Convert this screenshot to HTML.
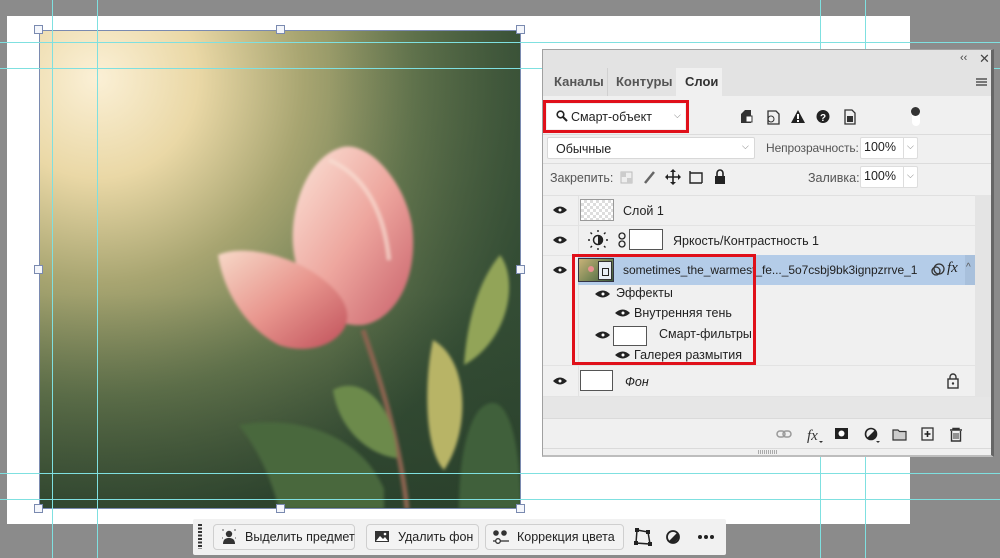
<!DOCTYPE html>
<html><head><meta charset="utf-8"><style>
*{margin:0;padding:0;box-sizing:border-box}
body{width:1000px;height:558px;overflow:hidden;background:#8b8b8b;position:relative;font-family:"Liberation Sans","DejaVu Sans",sans-serif;font-size:12px;color:#222}
.a{position:absolute}
.gv{position:absolute;top:0;height:558px;width:1px;background:#7fe0e0}
.gh{position:absolute;left:0;width:1000px;height:1px;background:#7fe0e0}
.h{position:absolute;width:9px;height:9px;background:#f4f6fb;border:1px solid #7a8ab0}
.t{position:absolute;white-space:nowrap}
.box{position:absolute;background:#fff;border:1px solid #c8c8c8;border-radius:2px}
.btn{position:absolute;top:524px;height:26px;background:#f3f3f3;border:1px solid #cfcfcf;border-radius:4px;font-size:12.5px;color:#222}
</style></head><body>
<div class="a" style="left:7px;top:16px;width:903px;height:508px;background:#fff"></div>
<svg class="a" style="left:39px;top:30px" width="482" height="479" viewBox="0 0 482 479">
<defs>
<radialGradient id="lg" cx="0.12" cy="0.1" r="0.95">
<stop offset="0" stop-color="#fbf0d6"/><stop offset="0.22" stop-color="#ead8a6"/><stop offset="0.45" stop-color="#a8a571"/><stop offset="0.7" stop-color="#6b7c52"/><stop offset="1" stop-color="#3a5238"/></radialGradient>
<linearGradient id="bt" x1="0" y1="0" x2="0" y2="1"><stop offset="0.55" stop-color="#1c3020" stop-opacity="0"/><stop offset="1" stop-color="#1c3020" stop-opacity="0.45"/></linearGradient>
<linearGradient id="rt" x1="0" y1="0" x2="1" y2="0"><stop offset="0.6" stop-color="#2c4630" stop-opacity="0"/><stop offset="1" stop-color="#2c4630" stop-opacity="0.45"/></linearGradient>
<linearGradient id="p1" x1="0" y1="0" x2="1" y2="1"><stop offset="0" stop-color="#fbe4d8"/><stop offset="0.5" stop-color="#eea79f"/><stop offset="1" stop-color="#c8606a"/></linearGradient>
<linearGradient id="p2" x1="0" y1="0" x2="1" y2="1"><stop offset="0" stop-color="#f7d9c8"/><stop offset="0.5" stop-color="#e8968e"/><stop offset="1" stop-color="#c0505a"/></linearGradient>
<filter id="bl"><feGaussianBlur stdDeviation="1.5"/></filter>
</defs>
<rect width="482" height="479" fill="url(#lg)"/>
<rect width="482" height="479" fill="url(#rt)"/>
<rect width="482" height="479" fill="url(#bt)"/>
<g filter="url(#bl)">
<path d="M324 300 C 345 360 362 420 368 479" stroke="#8a6450" stroke-width="5" fill="none"/>
<path d="M461 225 C 480 250 470 310 425 335 C 428 290 440 250 461 225Z" fill="#92a458"/>
<path d="M394 310 C 430 330 432 400 405 440 C 385 420 385 350 394 310Z" fill="#b8b466"/>
<path d="M294 360 C 320 345 355 370 358 428 C 330 425 300 400 294 360Z" fill="#6c8a4c"/>
<path d="M200 395 C 250 385 320 400 345 459 L 345 479 L 240 479 C 230 440 215 415 200 395Z" fill="#48683c"/>
<path d="M440 380 C 470 350 482 420 482 479 L 420 479 C 420 440 425 400 440 380Z" fill="#40603a"/>
<path d="M304 117 C 330 112 365 150 373 195 C 380 250 355 290 324 295 C 285 298 258 262 254 215 C 251 175 270 125 304 117Z" fill="url(#p1)"/>
<path d="M179 225 C 200 215 250 222 285 250 C 310 270 315 290 300 305 C 285 320 260 322 240 315 C 210 300 185 265 179 225Z" fill="url(#p2)"/>
<path d="M290 130 C 325 145 345 180 350 230" stroke="#f9dfd4" stroke-width="4" fill="none" opacity="0.7"/>
</g>
</svg>
<div class="a" style="left:39px;top:30px;width:482px;height:479px;border:1px solid #7a8ab0"></div>
<div class="gv" style="left:52px"></div><div class="gv" style="left:97px"></div><div class="gv" style="left:820px"></div><div class="gv" style="left:865px"></div>
<div class="gh" style="top:42px"></div><div class="gh" style="top:68px"></div><div class="gh" style="top:473px"></div><div class="gh" style="top:499px"></div>
<div class="h" style="left:34px;top:25px"></div><div class="h" style="left:276px;top:25px"></div><div class="h" style="left:516px;top:25px"></div>
<div class="h" style="left:34px;top:265px"></div><div class="h" style="left:516px;top:265px"></div>
<div class="h" style="left:34px;top:504px"></div><div class="h" style="left:276px;top:504px"></div><div class="h" style="left:516px;top:504px"></div>

<!-- panel -->
<div class="a" style="left:542px;top:49px;width:452px;height:408px;background:#f0f0f0;border:1px solid #a0a0a0;border-right:3px solid #666;border-bottom:2px solid #bdbdbd"></div>
<div class="a" style="left:543px;top:50px;width:448px;height:18px;background:#e3e3e3"></div>
<div class="t" style="left:960px;top:52px;font-size:11px;color:#444">‹‹</div>
<div class="t" style="left:979px;top:51px;font-size:13px;color:#444">✕</div>
<div class="a" style="left:543px;top:68px;width:448px;height:28px;background:#e3e3e3"></div>
<div class="a" style="left:607px;top:68px;width:1px;height:28px;background:#d0d0d0"></div>
<div class="a" style="left:676px;top:68px;width:46px;height:29px;background:#f0f0f0"></div>
<div class="t" style="left:554px;top:74px;font-size:13px;font-weight:bold;color:#555">Каналы</div>
<div class="t" style="left:616px;top:74px;font-size:13px;font-weight:bold;color:#555">Контуры</div>
<div class="t" style="left:685px;top:74px;font-size:13px;font-weight:bold;color:#333">Слои</div>
<div class="a" style="left:976px;top:78px;width:11px;height:8px;border-top:2px solid #777;border-bottom:2px solid #777"></div><div class="a" style="left:976px;top:81px;width:11px;height:2px;background:#777"></div>

<div class="a" style="left:543px;top:100px;width:146px;height:33px;border:3px solid #e0101a"></div>
<div class="a" style="left:547px;top:104px;width:138px;height:25px;background:#fff"></div>
<svg class="a" style="left:556px;top:110px" width="12" height="12"><circle cx="4.5" cy="4.5" r="3.3" stroke="#222" stroke-width="1.6" fill="none"/><path d="M7 7l4 4" stroke="#222" stroke-width="2"/></svg>
<div class="t" style="left:571px;top:110px;font-size:12.5px">Смарт-объект</div>
<div class="t" style="left:674px;top:110px;font-size:9px;color:#777">⌵</div>
<svg class="a" style="left:738px;top:108px" width="125" height="18">
<path d="M3 15 L3 6 L7 2 L13 2 L13 15Z" fill="#333"/><rect x="8" y="8" width="6" height="6" fill="#fff" stroke="#333"/>
<path d="M30 3h8l3 3v10h-11z" fill="none" stroke="#333" stroke-width="1.3"/><circle cx="33" cy="11" r="3" fill="none" stroke="#333"/>
<path d="M60 2 L67 15 L53 15Z" fill="#222"/><rect x="59" y="6" width="2" height="5" fill="#fff"/><rect x="59" y="12" width="2" height="2" fill="#fff"/>
<circle cx="85" cy="8.5" r="6.5" fill="#222"/><text x="82" y="13" font-size="10" font-weight="bold" fill="#fff" font-family="Liberation Sans">?</text>
<path d="M107 2h7l3 3v11h-10z" fill="none" stroke="#333" stroke-width="1.3"/><rect x="109" y="8" width="6" height="6" fill="#333"/>
</svg>
<div class="a" style="left:912px;top:113px;width:8px;height:13px;background:#fff;border-radius:4px"></div>
<div class="a" style="left:911px;top:107px;width:9px;height:9px;background:#333;border-radius:50%"></div>
<div class="a" style="left:543px;top:134px;width:448px;height:1px;background:#dcdcdc"></div>

<div class="box" style="left:547px;top:137px;width:208px;height:22px;border-color:#d8d8d8"></div>
<div class="t" style="left:556px;top:142px;font-size:12.5px">Обычные</div>
<div class="t" style="left:742px;top:141px;font-size:9px;color:#777">⌵</div>
<div class="t" style="left:766px;top:141px;font-size:12px;color:#555;letter-spacing:-0.1px">Непрозрачность:</div>
<div class="box" style="left:860px;top:137px;width:58px;height:22px;border-color:#ddd"></div>
<div class="a" style="left:903px;top:138px;width:1px;height:20px;background:#ddd"></div>
<div class="t" style="left:864px;top:140px;font-size:12.5px">100%</div>
<div class="t" style="left:907px;top:141px;font-size:9px;color:#777">⌵</div>
<div class="a" style="left:543px;top:163px;width:448px;height:1px;background:#dcdcdc"></div>

<div class="t" style="left:550px;top:171px;font-size:12.5px;color:#555">Закрепить:</div>
<svg class="a" style="left:619px;top:169px" width="110" height="16">
<rect x="2" y="3" width="11" height="11" fill="#eee" stroke="#bbb"/><rect x="2" y="3" width="5" height="5" fill="#ccc"/><rect x="8" y="9" width="5" height="5" fill="#ccc"/>
<path d="M26 14 L35 3" stroke="#666" stroke-width="2.5"/>
<path d="M54 1v14M47 8h14" stroke="#222" stroke-width="1.6"/><path d="M54 0l-3 3h6zM54 16l-3-3h6zM46 8l3-3v6zM62 8l-3-3v6z" fill="#222"/>
<path d="M71 4h12v10M71 2v12h12" stroke="#222" stroke-width="1.4" fill="none"/>
<rect x="96" y="7" width="10" height="8" fill="#222"/><path d="M98 7v-3a3 3 0 0 1 6 0v3" stroke="#222" stroke-width="1.6" fill="none"/>
</svg>
<div class="t" style="left:808px;top:171px;font-size:12.5px;color:#555">Заливка:</div>
<div class="box" style="left:860px;top:166px;width:58px;height:22px;border-color:#ddd"></div>
<div class="a" style="left:903px;top:167px;width:1px;height:20px;background:#ddd"></div>
<div class="t" style="left:864px;top:169px;font-size:12.5px">100%</div>
<div class="t" style="left:907px;top:170px;font-size:9px;color:#777">⌵</div>

<!-- layers -->
<div class="a" style="left:975px;top:195px;width:16px;height:223px;background:#e4e4e4"></div>
<div class="a" style="left:543px;top:195px;width:432px;height:1px;background:#e0e0e0"></div>
<div class="a" style="left:578px;top:196px;width:1px;height:200px;background:#e2e2e2"></div>
<div class="a" style="left:543px;top:225px;width:432px;height:1px;background:#e3e3e3"></div>
<div class="a" style="left:543px;top:255px;width:432px;height:1px;background:#e3e3e3"></div>
<div class="a" style="left:578px;top:255px;width:397px;height:30px;background:#b4cce8"></div>
<div class="a" style="left:965px;top:255px;width:10px;height:30px;background:#a8c0dc"></div>
<div class="a" style="left:543px;top:365px;width:432px;height:1px;background:#e3e3e3"></div>
<div class="a" style="left:543px;top:396px;width:432px;height:1px;background:#e3e3e3"></div>
<div class="a" style="left:543px;top:397px;width:448px;height:21px;background:#e6e6e6"></div>

<svg class="a" style="left:543px;top:196px" width="100" height="200">
<g fill="#222">
<path d="M10 14 Q17 7 24 14 Q17 21 10 14Z"/><path d="M10 44 Q17 37 24 44 Q17 51 10 44Z"/><path d="M10 74 Q17 67 24 74 Q17 81 10 74Z"/>
<path d="M52 98 Q60 91 67 98 Q60 105 52 98Z"/><path d="M72 117 Q80 110 87 117 Q80 124 72 117Z"/><path d="M52 139 Q60 132 67 139 Q60 146 52 139Z"/><path d="M72 159 Q80 152 87 159 Q80 166 72 159Z"/>
<path d="M10 185 Q17 178 24 185 Q17 192 10 185Z"/>
</g>
<g fill="#fff"><circle cx="17" cy="14" r="1.5"/><circle cx="17" cy="44" r="1.5"/><circle cx="17" cy="74" r="1.5"/><circle cx="60" cy="98" r="1.5"/><circle cx="80" cy="117" r="1.5"/><circle cx="60" cy="139" r="1.5"/><circle cx="80" cy="159" r="1.5"/><circle cx="17" cy="185" r="1.5"/></g>
<circle cx="55" cy="44" r="4.5" fill="none" stroke="#222" stroke-width="1.5"/><path d="M55 39.5a4.5 4.5 0 0 1 0 9z" fill="#222"/>
<path d="M55 36v-2M55 52v2M47 44h-2M63 44h2M49 38l-1.5-1.5M61 50l1.5 1.5M61 38l1.5-1.5M49 50l-1.5 1.5" stroke="#222" stroke-width="1.4"/>
<rect x="76" y="37" width="6" height="6" rx="3" fill="none" stroke="#222" stroke-width="1.3"/><rect x="76" y="45" width="6" height="6" rx="3" fill="none" stroke="#222" stroke-width="1.3"/>
</svg>
<div class="a" style="left:580px;top:199px;width:34px;height:22px;border:1px solid #999;background-color:#fff;background-image:repeating-conic-gradient(#ddd 0 25%,#fff 0 50%);background-size:6px 6px"></div>
<div class="t" style="left:623px;top:204px;font-size:12.5px">Слой 1</div>
<div class="a" style="left:629px;top:229px;width:34px;height:21px;border:1px solid #555;background:#fff"></div>
<div class="t" style="left:673px;top:234px;font-size:12.5px">Яркость/Контрастность 1</div>
<div class="a" style="left:578px;top:258px;width:36px;height:24px;border:1px solid #334;background:linear-gradient(135deg,#c9b278,#7e8a58 50%,#3d5a3c)"></div>
<div class="a" style="left:588px;top:266px;width:6px;height:6px;border-radius:50%;background:#e89090"></div>
<div class="a" style="left:598px;top:261px;width:14px;height:19px;background:#e8eef6;border:1px solid #333"></div>
<div class="a" style="left:602px;top:268px;width:7px;height:8px;border:1.5px solid #222"></div>
<div class="t" style="left:623px;top:263px;font-size:12px;letter-spacing:-0.05px">sometimes_the_warmest_fe..._5o7csbj9bk3ignpzrrve_1</div>
<svg class="a" style="left:930px;top:262px" width="16" height="16"><circle cx="9" cy="7" r="5" fill="none" stroke="#333" stroke-width="1.3"/><circle cx="6" cy="9" r="4" fill="none" stroke="#333" stroke-width="1.3"/></svg>
<div class="t" style="left:947px;top:260px;font-size:15px;font-style:italic;font-family:'Liberation Serif',serif">fx</div>
<div class="t" style="left:966px;top:262px;font-size:10px;color:#555">^</div>
<div class="t" style="left:616px;top:286px;font-size:12.5px">Эффекты</div>
<div class="t" style="left:634px;top:306px;font-size:12.5px">Внутренняя тень</div>
<div class="a" style="left:613px;top:326px;width:34px;height:20px;border:1px solid #555;background:#fff"></div>
<div class="t" style="left:659px;top:327px;font-size:12.5px">Смарт-фильтры</div>
<div class="t" style="left:634px;top:348px;font-size:12.5px">Галерея размытия</div>
<div class="a" style="left:580px;top:370px;width:33px;height:21px;border:1px solid #555;background:#fff"></div>
<div class="t" style="left:625px;top:375px;font-size:12.5px;font-style:italic">Фон</div>
<svg class="a" style="left:946px;top:373px" width="14" height="16"><rect x="2" y="6" width="10" height="9" fill="none" stroke="#333" stroke-width="1.4"/><path d="M4 6v-2a3 3 0 0 1 6 0v2" fill="none" stroke="#333" stroke-width="1.4"/><circle cx="7" cy="10.5" r="1.2" fill="#333"/></svg>
<div class="a" style="left:572px;top:254px;width:184px;height:111px;border:3px solid #e0101a"></div>

<div class="a" style="left:543px;top:418px;width:448px;height:1px;background:#dadada"></div>
<svg class="a" style="left:775px;top:425px" width="195" height="20">
<g stroke="#999" stroke-width="1.5" fill="none"><rect x="2" y="6" width="8" height="6" rx="3"/><rect x="8" y="6" width="8" height="6" rx="3"/></g>
<text x="32" y="15" font-size="15" font-style="italic" font-family="Liberation Serif" fill="#333">fx</text><path d="M44 16h4l-2 2z" fill="#333"/>
<rect x="60" y="3" width="13" height="11" fill="#222"/><circle cx="66.5" cy="8.5" r="3" fill="#fff"/>
<circle cx="96" cy="9" r="5.5" fill="none" stroke="#222" stroke-width="1.6"/><path d="M96 3.5a5.5 5.5 0 0 1 0 11z" fill="#222" transform="rotate(45 96 9)"/><path d="M101 16h4l-2 2z" fill="#333"/>
<path d="M118 5h5l1.5 1.5h6.5v8.5h-13z" fill="#ccc" stroke="#333" stroke-width="1.2"/>
<rect x="147" y="3" width="11" height="12" fill="none" stroke="#333" stroke-width="1.3"/><path d="M152.5 6v6M149.5 9h6" stroke="#222" stroke-width="1.6"/>
<path d="M175 5h12M178 5v-1.5h6V5M176.5 6v10h9V6" fill="none" stroke="#333" stroke-width="1.4"/><path d="M179 8v6M181 8v6M183 8v6" stroke="#333"/>
</svg>
<div class="a" style="left:543px;top:448px;width:448px;height:1px;background:#dadada"></div>
<div class="a" style="left:758px;top:450px;width:20px;height:4px;background:repeating-linear-gradient(90deg,#aaa 0 1px,transparent 1px 2px)"></div>

<!-- bottom toolbar -->
<div class="a" style="left:193px;top:519px;width:533px;height:36px;background:#f1f1f1;border-radius:2px"></div>
<div class="a" style="left:198px;top:524px;width:4px;height:25px;background:repeating-linear-gradient(180deg,#333 0 2px,transparent 2px 3.5px)"></div>
<div class="btn" style="left:213px;width:142px"></div>
<svg class="a" style="left:221px;top:529px" width="16" height="16"><circle cx="8" cy="5" r="3.2" fill="#333"/><path d="M2 15c0-5 3-6 6-6s6 1 6 6z" fill="#333"/><path d="M1 1h2M13 1h2M1 9h1M14 9h1" stroke="#555"/></svg>
<div class="t" style="left:245px;top:530px;font-size:12.5px">Выделить предмет</div>
<div class="btn" style="left:366px;width:113px"></div>
<svg class="a" style="left:374px;top:530px" width="16" height="14"><rect x="1" y="1" width="14" height="11" fill="#333"/><path d="M2 11l4-5 3 3 2-2 3 4z" fill="#fff"/><circle cx="11" cy="4" r="1.3" fill="#fff"/></svg>
<div class="t" style="left:398px;top:530px;font-size:12.5px">Удалить фон</div>
<div class="btn" style="left:485px;width:139px"></div>
<svg class="a" style="left:492px;top:529px" width="18" height="16"><circle cx="4" cy="4" r="2.8" fill="#333"/><circle cx="12" cy="4" r="2.8" fill="#333"/><path d="M1 12h16" stroke="#333" stroke-width="1.3"/><circle cx="6" cy="12" r="2.3" fill="#fff" stroke="#333" stroke-width="1.3"/></svg>
<div class="t" style="left:517px;top:530px;font-size:12.5px">Коррекция цвета</div>
<svg class="a" style="left:633px;top:527px" width="20" height="20"><path d="M4 3 L15 5 L17 17 L3 16Z" fill="none" stroke="#222" stroke-width="1.5"/><g fill="#222"><rect x="2" y="1" width="4" height="4"/><rect x="13" y="3" width="4" height="4"/><rect x="15" y="15" width="4" height="4"/><rect x="1" y="14" width="4" height="4"/></g></svg>
<svg class="a" style="left:665px;top:529px" width="16" height="16"><circle cx="8" cy="8" r="6" fill="none" stroke="#222" stroke-width="1.8"/><path d="M12.2 3.8A6 6 0 0 1 3.8 12.2z" fill="#222"/></svg>
<div class="a" style="left:698px;top:535px;width:4px;height:4px;border-radius:50%;background:#222;box-shadow:6px 0 #222,12px 0 #222"></div>
</body></html>
